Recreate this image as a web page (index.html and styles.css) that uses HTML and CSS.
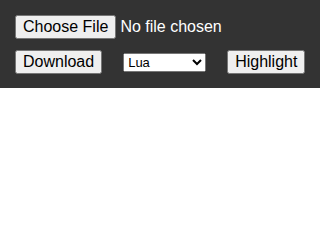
FILE: index.html
```html
<!DOCTYPE html>
<html lang="en">
<head>
    <meta charset="UTF-8">
    <title>Code Highlighter</title>
    <link rel="stylesheet" href="styles.css">
</head>
<body>

<div class="toolbar">
    <div class="row">
        <input type="file" id="file-input" class="file-input">
    </div>
    <div class="row">
        <button class="button">Download</button>
        <select class="lang-select">
            <option>Lua</option>
            <option>Python</option>
            <option>JavaScript</option>
        </select>
        <button class="button">Highlight</button>
    </div>
</div>

</body>
</html>
```

FILE: styles.css
```css
body {
    margin: 0;
    background-color: #ffffff;
    font-family: Arial, "Liberation Sans", sans-serif;
}
.toolbar {
    background-color: #333333; /* dark bar */
    color: #ffffff;
    padding: 15px 15px 14px;
}
.row {
    display: flex;
    align-items: center;
}
.row + .row {
    margin-top: 11px;
}
.file-input {
    font-family: Arial, "Liberation Sans", sans-serif;
    font-size: 16px;
    color: #ffffff;
}
.button {
    font-family: Arial, "Liberation Sans", sans-serif;
    font-size: 16px;
}
.lang-select {
    font-family: Arial, "Liberation Sans", sans-serif;
    font-size: 13px;
    width: 85px;
    margin: 0 21px 0 21px;
}
```
